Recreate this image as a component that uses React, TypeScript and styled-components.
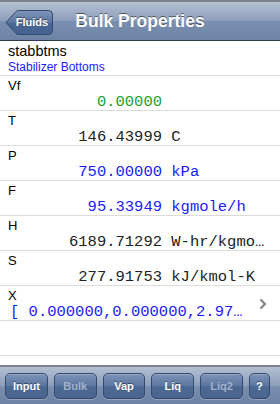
import styled, { createGlobalStyle } from 'styled-components';

const GlobalStyle = createGlobalStyle`
  html, body {
    margin: 0;
    padding: 0;
    background: #ffffff;
  }
  body {
    width: 280px;
    height: 404px;
    overflow: hidden;
    font-family: 'Liberation Sans', Arial, sans-serif;
  }
`;

const Screen = styled.div`
  display: flex;
  flex-direction: column;
  width: 280px;
  height: 404px;
  background: #ffffff;
`;

const NavBar = styled.div`
  display: grid;
  grid-template-columns: 1fr auto 1fr;
  align-items: center;
  height: 38px;
  border-top: 2px solid #7d838c;
  border-bottom: 1px solid #2d3a4f;
  background: linear-gradient(#b6c2d3, #8b9dba 50%, #7a8fb0 51%, #6d84a5);
`;

const BackButton = styled.div`
  position: relative;
  justify-self: start;
  display: flex;
  align-items: center;
  justify-content: center;
  width: 48px;
  height: 25px;
  margin: 2px 0 0 5px;
  padding-left: 6px;
  box-sizing: border-box;
  color: #ffffff;
  font-size: 11px;
  font-weight: bold;
  text-shadow: 0 -1px 0 rgba(0, 0, 0, 0.45);

  svg {
    position: absolute;
    inset: 0;
  }

  span {
    position: relative;
  }
`;

const Title = styled.div`
  color: #ffffff;
  font-size: 17.5px;
  font-weight: bold;
  text-shadow: 0 -1px 0 rgba(0, 0, 0, 0.5);
  white-space: nowrap;
`;

const Content = styled.div`
  flex: 1;
  display: flex;
  flex-direction: column;
`;

const Header = styled.div`
  height: 32px;
  padding: 2px 8px 0;
  border-bottom: 1px solid #dcdcdc;
`;

const Name = styled.div`
  font-size: 14.5px;
  line-height: 17px;
  color: #000000;
`;

const Description = styled.div`
  font-size: 12px;
  line-height: 14px;
  color: #1a1aff;
`;

const Row = styled.div`
  position: relative;
  height: 32px;
  padding: 2px 0 0 8px;
  border-bottom: 1px solid #dcdcdc;
`;

const Label = styled.div`
  font-size: 13px;
  line-height: 15px;
  color: #000000;
`;

const ValueLine = styled.div<{ $color: string }>`
  display: flex;
  width: 260px;
  font-family: 'Liberation Mono', 'Courier New', monospace;
  font-size: 15.5px;
  line-height: 18px;
  color: ${(p) => p.$color};
  white-space: pre;
`;

const Number = styled.span`
  flex: none;
  width: 154px;
  text-align: right;
`;

const Unit = styled.span`
  flex: none;
  padding-left: 9.3px;
`;

const ArrayValue = styled.div`
  padding-left: 2px;
  font-family: 'Liberation Mono', 'Courier New', monospace;
  font-size: 15.5px;
  line-height: 18px;
  color: #1a1aff;
  white-space: pre;
`;

const Chevron = styled.svg`
  position: absolute;
  right: 13px;
  top: 12px;
`;

const EmptyRow = styled.div`
  height: 34px;
  border-bottom: 1px solid #dcdcdc;
`;

const Toolbar = styled.div`
  margin-top: auto;
  display: flex;
  align-items: center;
  gap: 6px;
  height: 37px;
  padding: 0 10px 0 5px;
  border-top: 2px solid #7d838c;
  background: linear-gradient(#b3bfd0, #8d9fbb 50%, #7b90b0 51%, #6c82a3);
`;

const ToolButton = styled.div<{ $disabled?: boolean; $narrow?: boolean }>`
  display: flex;
  align-items: center;
  justify-content: center;
  width: ${(p) => (p.$narrow ? '20px' : '43px')};
  height: 24px;
  border: 1px solid #34496d;
  border-radius: 5px;
  background: linear-gradient(#7d94b7, #5b76a0 50%, #4c6993 51%, #4a6690);
  box-shadow: inset 0 1px 0 rgba(255, 255, 255, 0.2), 0 1px 0 rgba(255, 255, 255, 0.25);
  color: ${(p) => (p.$disabled ? '#a2b1c8' : '#ffffff')};
  font-size: 11px;
  font-weight: bold;
  text-shadow: ${(p) => (p.$disabled ? 'none' : '0 -1px 0 rgba(0, 0, 0, 0.45)')};
`;

type Property = {
  label: string;
  value: string;
  unit?: string;
  color: string;
};

// values are shown as the device truncates them
const properties: Property[] = [
  { label: 'Vf', value: '0.00000', color: '#1d9f1d' },
  { label: 'T', value: '146.43999', unit: 'C', color: '#222222' },
  { label: 'P', value: '750.00000', unit: 'kPa', color: '#1a1aff' },
  { label: 'F', value: '95.33949', unit: 'kgmole/h', color: '#1a1aff' },
  { label: 'H', value: '6189.71292', unit: 'W-hr/kgmo…', color: '#222222' },
  { label: 'S', value: '277.91753', unit: 'kJ/kmol-K', color: '#222222' },
];

const tools = [
  { label: 'Input' },
  { label: 'Bulk', disabled: true },
  { label: 'Vap' },
  { label: 'Liq' },
  { label: 'Liq2', disabled: true },
  { label: '?', narrow: true },
];

const App = () => {
  return (
    <Screen>
      <GlobalStyle />
      <NavBar>
        <BackButton>
          <svg width="48" height="25" viewBox="0 0 48 25">
            <defs>
              <linearGradient id="back" x1="0" y1="0" x2="0" y2="1">
                <stop offset="0" stopColor="#8096b8" />
                <stop offset="0.5" stopColor="#5a74a0" />
                <stop offset="0.51" stopColor="#4a6692" />
                <stop offset="1" stopColor="#46628e" />
              </linearGradient>
            </defs>
            <path
              d="M1 12.5 L11 1.5 Q12 0.5 13.5 0.5 L43.5 0.5 Q47.5 0.5 47.5 4.5 L47.5 20.5 Q47.5 24.5 43.5 24.5 L13.5 24.5 Q12 24.5 11 23.5 Z"
              fill="url(#back)"
              stroke="#34496d"
            />
          </svg>
          <span>Fluids</span>
        </BackButton>
        <Title>Bulk Properties</Title>
        <div />
      </NavBar>

      <Content>
        <Header>
          <Name>stabbtms</Name>
          <Description>Stabilizer Bottoms</Description>
        </Header>

        {properties.map((p) => (
          <Row key={p.label}>
            <Label>{p.label}</Label>
            <ValueLine $color={p.color}>
              <Number>{p.value}</Number>
              {p.unit && <Unit>{p.unit}</Unit>}
            </ValueLine>
          </Row>
        ))}

        <Row>
          <Label>X</Label>
          <ArrayValue>[ 0.000000,0.000000,2.97…</ArrayValue>
          <Chevron width="8" height="12" viewBox="0 0 8 12">
            <path d="M1.5 1.5 L6 6 L1.5 10.5" fill="none" stroke="#8a8a8a" strokeWidth="2.4" />
          </Chevron>
        </Row>

        <EmptyRow />

        <Toolbar>
          {tools.map((t) => (
            <ToolButton key={t.label} $disabled={t.disabled} $narrow={t.narrow}>
              {t.label}
            </ToolButton>
          ))}
        </Toolbar>
      </Content>
    </Screen>
  );
};

export default App;
